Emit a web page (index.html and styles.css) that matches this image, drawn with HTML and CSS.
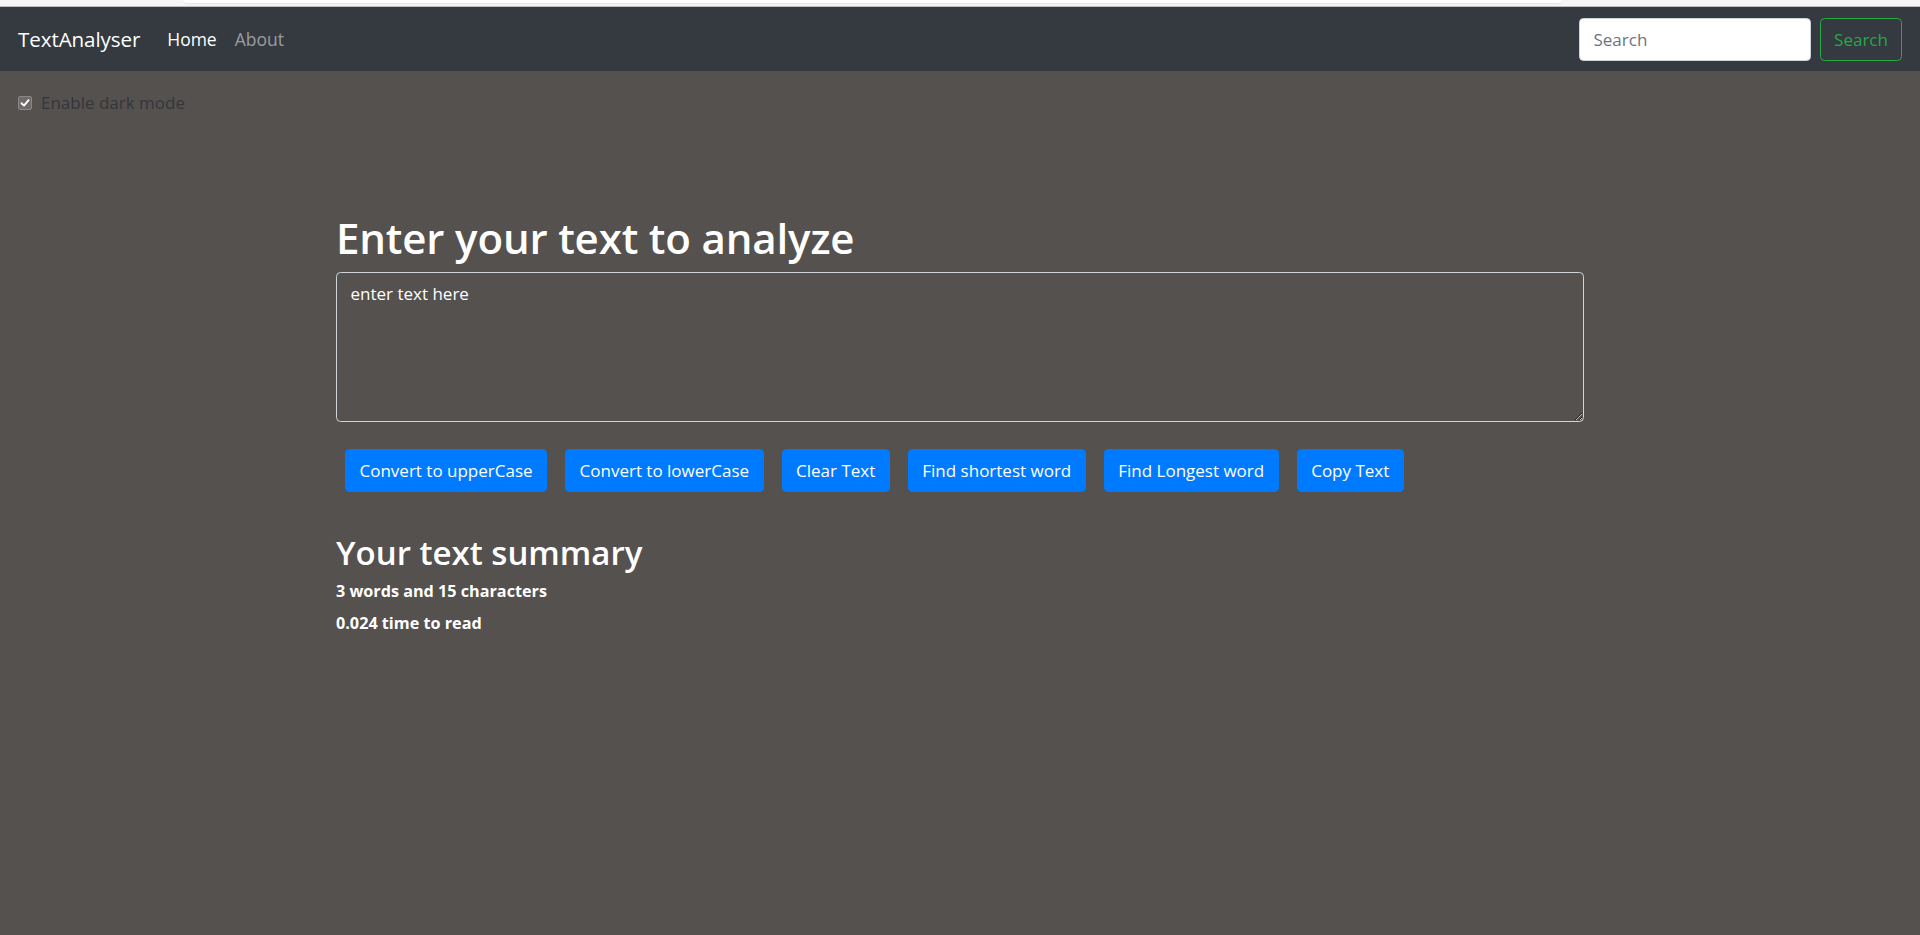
FILE: index.html
```html
<!DOCTYPE html>
<html lang="en">
<head>
<meta charset="utf-8">
<title>TextAnalyser</title>
<link rel="stylesheet" href="styles.css">
</head>
<body>
<div class="topstrip"><div class="topstrip-card"></div></div>
<nav class="navbar">
  <a class="brand" href="#">TextAnalyser</a>
  <ul class="nav-links">
    <li><a class="nav-link active" href="#">Home</a></li>
    <li><a class="nav-link" href="#">About</a></li>
  </ul>
  <form class="search-form">
    <input class="search-input" type="search" placeholder="Search">
    <button class="search-btn" type="button">Search</button>
  </form>
</nav>
<div class="mode-toggle">
  <span class="check-box">
    <svg width="10" height="10" viewBox="0 0 10 10"><path d="M1.5 5.2 L4 7.6 L8.6 2.2" fill="none" stroke="#fff" stroke-width="1.9" stroke-linecap="round" stroke-linejoin="round"/></svg>
  </span>
  <label class="check-label">Enable dark mode</label>
</div>
<main class="container">
  <h1 class="title">Enter your text to analyze</h1>
  <textarea class="text-box" rows="5">enter text here</textarea>
  <div class="actions">
    <button class="btn" type="button">Convert to upperCase</button>
    <button class="btn" type="button">Convert to lowerCase</button>
    <button class="btn" type="button">Clear Text</button>
    <button class="btn" type="button">Find shortest word</button>
    <button class="btn" type="button">Find Longest word</button>
    <button class="btn" type="button">Copy Text</button>
  </div>
  <h2 class="summary-title">Your text summary</h2>
  <p class="stat">3 words and 15 characters</p>
  <p class="stat">0.024 time to read</p>
</main>
</body>
</html>
```

FILE: styles.css
```css
* { box-sizing: border-box; }
html, body { margin: 0; padding: 0; }
body {
  background: #55514f;
  font-family: "Open Sans", "Noto Sans", sans-serif;
  font-size: 17px;
  color: #fff;
  height: 935px;
  overflow: hidden;
}
.topstrip {
  height: 7px;
  background: #f6f6f6;
  border-bottom: 1px solid #bdbdbd;
}
.topstrip-card {
  margin-left: 184px;
  width: 1378px;
  height: 3px;
  background: #fff;
  border-radius: 0 0 4px 4px;
  box-shadow: 0 1px 2px rgba(0,0,0,0.08);
}
.navbar {
  height: 64px;
  background: #343a40;
  display: flex;
  align-items: center;
  padding: 0 18px;
}
.brand {
  color: #fff;
  text-decoration: none;
  font-size: 20.6px;
  margin-right: 18px;
  letter-spacing: -0.1px;
}
.nav-links {
  list-style: none;
  margin: 0;
  padding: 0;
  display: flex;
  flex: 1;
}
.nav-link {
  display: block;
  padding: 0 9px;
  color: rgba(255,255,255,0.5);
  text-decoration: none;
  font-size: 17.5px;
}
.nav-link.active { color: #fff; }
.search-form {
  display: flex;
  align-items: center;
  gap: 9px;
}
.search-input {
  width: 232px;
  height: 43px;
  border: 1px solid #ced4da;
  border-radius: 4.5px;
  padding: 0 13.5px;
  font-family: inherit;
  font-size: 17px;
  color: #495057;
  background: #fff;
  outline: none;
}
.search-input::placeholder { color: #6c757d; }
.search-btn {
  height: 43px;
  width: 82px;
  border: 1px solid #28a745;
  border-radius: 4.5px;
  background: transparent;
  color: #28a745;
  font-family: inherit;
  font-size: 17px;
  padding: 0;
}
.mode-toggle {
  display: flex;
  align-items: center;
  margin-top: 18px;
  padding-left: 18px;
  height: 27px;
}
.check-box {
  width: 14px;
  height: 14px;
  border-radius: 2px;
  background: #6e6b6a;
  border: 1px solid #8b8887;
  display: flex;
  align-items: center;
  justify-content: center;
  margin-right: 9px;
}
.check-box svg { display: block; }
.check-label {
  color: #33373c;
  font-size: 17px;
}
.container {
  width: 1248px;
  margin: 96.5px auto 0;
}
.title {
  margin: 0 0 9px;
  font-size: 42px;
  font-weight: 600;
  line-height: 1.2;
  letter-spacing: -0.15px;
}
.text-box {
  display: block;
  width: 100%;
  height: 150px;
  margin: 0;
  padding: 6.75px 13.5px;
  border: 1px solid #ced4da;
  border-radius: 4.5px;
  background: #55514f;
  color: #fff;
  font-family: inherit;
  font-size: 17px;
  line-height: 27px;
  resize: vertical;
  outline: none;
}
.actions {
  display: flex;
  margin-top: 27.5px;
  padding-left: 9px;
  gap: 18px;
}
.btn {
  height: 43px;
  padding: 0 13.5px;
  background: #007bff;
  border: 1px solid #007bff;
  border-radius: 4.5px;
  color: #fff;
  font-family: inherit;
  font-size: 17px;
}
.summary-title {
  margin: 41px 0 5px;
  font-size: 33px;
  font-weight: 600;
  line-height: 1.2;
}
.stat {
  margin: 0 0 5.5px;
  font-size: 16.2px;
  font-weight: 700;
  line-height: 27px;
}
```
